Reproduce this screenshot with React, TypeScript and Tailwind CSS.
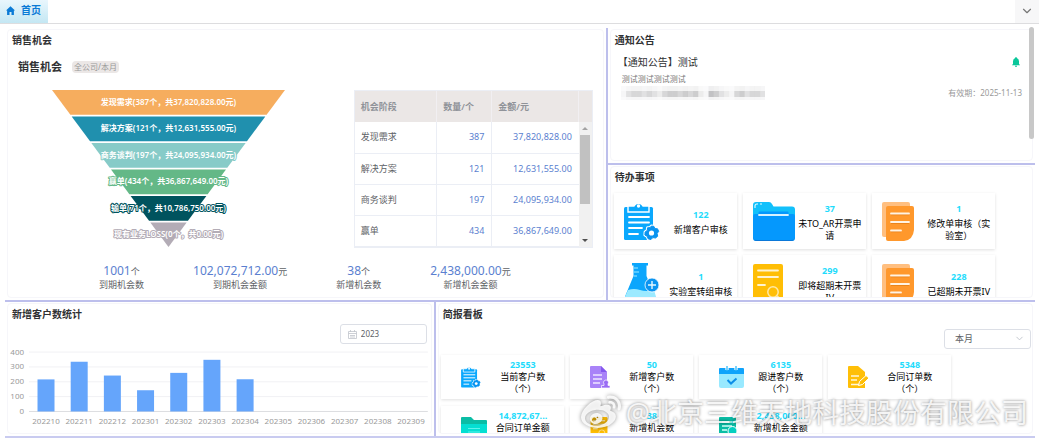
import React from "react";
import { FaWeibo } from "react-icons/fa";
import { ChevronDown } from "lucide-react";

type IconProps = { className?: string };

const GEAR =
  "M0 -7 L2.4 -6.6 L3.4 -4.4 L6 -4.2 L7.2 -1.6 L5.6 0.4 L6.2 3.2 L4 5 L1.4 4.6 L-0.6 6.6 L-3.4 5.8 L-4.2 3.4 L-6.6 2 L-6.4 -1 L-4.2 -2.6 L-4 -5.2 L-1.4 -5.4 Z";

function ClipboardIcon({ className }: IconProps) {
  return (
    <svg viewBox="0 0 36 40" className={className} aria-hidden="true">
      <rect x="0" y="6" width="29" height="33" rx="1.5" fill="#0aa8fd" />
      <path d="M4 5h6a5 5 0 0 1 9 0h6v6H4z" fill="#0aa8fd" stroke="#fff" strokeWidth="1.4" />
      <circle cx="14.500" cy="5" r="1.700" fill="#fff" />
      <path d="M5 16h20M5 21.500h20M5 27h13M5 33h9" stroke="#fff" strokeWidth="1.800" strokeLinecap="round" />
      <g transform="translate(27.500 32)">
        <path d={GEAR} fill="#0aa2fb" stroke="#fff" strokeWidth="3" strokeLinejoin="round" />
        <path d={GEAR} fill="#0a94f0" stroke="#0a94f0" strokeWidth="1" strokeLinejoin="round" />
        <circle r="2.600" fill="#fff" />
      </g>
    </svg>
  );
}

function BlueFolderIcon({ className }: IconProps) {
  return (
    <svg viewBox="0 0 42 39" className={className} aria-hidden="true">
      <path d="M3 0h13q2 0 3 2l1.500 2.500H39q3 0 3 3V30H0V3q0-3 3-3z" fill="#12c0fb" />
      <path d="M0 14q0-2 2-2h3.500v-1.500q0-1 1-1h28q1 0 1 1V12H40q2 0 2 2v22q0 3-3 3H3q-3 0-3-3z" fill="#0598fd" />
      <path d="M0 35q0 4 4 4h34q4 0 4-4v2q-1 1-4 1H4q-3 0-4-1z" fill="#0b78d8" />
      <path d="M6 13h29" stroke="#d7f2ff" strokeWidth="1.800" strokeLinecap="round" />
      <path d="M2 6V4q0-2 2-2h1M7 2h2" stroke="#e4faff" strokeWidth="1.100" fill="none" />
    </svg>
  );
}

function OrangeDocIcon({ className }: IconProps) {
  return (
    <svg viewBox="0 0 32 39" className={className} aria-hidden="true">
      <path d="M2 0h24q2 0 2 2v33H2q-2 0-2-2V2q0-2 2-2z" fill="#ffbf80" />
      <path d="M6 4h24q2 0 2 2v22q-1 10-10 11H6q-2 0-2-2V6q0-2 2-2z" fill="#ff982c" />
      <path d="M9 12.500h18M9 21h18M9 29.500h10" stroke="#e57d14" strokeWidth="1.400" />
      <path d="M9 11.500h18M9 20h18M9 28.500h10" stroke="#fff3e4" strokeWidth="1.800" strokeLinecap="round" />
    </svg>
  );
}

function FlaskIcon({ className }: IconProps) {
  return (
    <svg viewBox="0 0 36 40" className={className} aria-hidden="true">
      <path d="M8 0h16v2.500h-1.500V13L32 36q1 4-3 4H3q-4 0-3-4L9.500 13V2.500H8z" fill="#0ba6fc" />
      <path d="M4 27q6-2 12 0t14 0l3 10q0 3-3 3H2q-3 0-2-4z" fill="#9ceaff" />
      <path d="M10 5h4M10 9h5M10 13h3" stroke="#9ceaff" strokeWidth="1.200" />
      <circle cx="28" cy="22" r="7" fill="#0b94f0" stroke="#fff" strokeWidth="0.800" />
      <path d="M28 18v8M24 22h8" stroke="#e4f8ff" strokeWidth="1.400" />
    </svg>
  );
}

function SearchDocIcon({ className }: IconProps) {
  return (
    <svg viewBox="0 0 30 39" className={className} aria-hidden="true">
      <rect width="30" height="39" rx="2" fill="#ffbe05" />
      <path d="M5 6.500h20M5 13h20M5 21h7" stroke="#fff3cf" strokeWidth="1.800" strokeLinecap="round" />
      <circle cx="20" cy="28" r="5.200" fill="none" stroke="#ffe9a6" strokeWidth="1.500" />
      <path d="M24 32l4 4" stroke="#ffe9a6" strokeWidth="1.800" />
    </svg>
  );
}

function PurpleDocIcon({ className }: IconProps) {
  return (
    <svg viewBox="0 0 20 22" className={className} aria-hidden="true">
      <path d="M1 0h10l6 6v16H1q-1 0-1-1V1q0-1 1-1z" fill="#a983f8" />
      <path d="M11 0v6h6z" fill="#8558ee" />
      <path d="M3 9h9M3 13h9M3 17h7" stroke="#eee6ff" strokeWidth="1.300" />
      <path d="M11.500 22v-2.500h2.500v-1.500a2.500 2.500 0 1 1 4 0v1.500h2V22z" fill="#9a6cf4" stroke="#fff" strokeWidth="0.700" />
    </svg>
  );
}

function CalendarIcon({ className }: IconProps) {
  return (
    <svg viewBox="0 0 25 22" className={className} aria-hidden="true">
      <path d="M1 2h23q1 0 1 1v5H0V3q0-1 1-1z" fill="#0fa3fb" />
      <path d="M0 8h25v12q0 2-2 2H2q-2 0-2-2z" fill="#99e9ff" />
      <path d="M8 0v4M17 0v4" stroke="#fff" strokeWidth="3.200" />
      <path d="M8 0v4M17 0v4" stroke="#49c4fb" strokeWidth="1.500" strokeLinecap="round" />
      <path d="M8.500 14l3.500 3.500 5.500-5" stroke="#0d8fe8" strokeWidth="2" fill="none" />
    </svg>
  );
}

function EditDocIcon({ className }: IconProps) {
  return (
    <svg viewBox="0 0 21 22" className={className} aria-hidden="true">
      <path d="M1 0h9l7 6v16H1q-1 0-1-1V1q0-1 1-1z" fill="#ffbf08" />
      <path d="M3 10h8M3 14h6M3 18.500h9" stroke="#fff6da" strokeWidth="1.500" />
      <path d="M10.500 19.500l1-4L18 9.500l3 2.500-6.500 6.500z" fill="#ffbf08" stroke="#fff" strokeWidth="1" />
    </svg>
  );
}

function GreenFolderIcon({ className }: IconProps) {
  return (
    <svg viewBox="0 0 26 22" className={className} aria-hidden="true">
      <path d="M1 0h9l3 3h12q1 0 1 1v8H0V1q0-1 1-1z" fill="#0bbda5" />
      <path d="M0 7h26v13q0 2-2 2H2q-2 0-2-2z" fill="#05dfd2" />
      <path d="M7 11.500h12M7 15h12" stroke="#5df3ea" strokeWidth="1.100" />
    </svg>
  );
}

function GreenSearchIcon({ className }: IconProps) {
  return (
    <svg viewBox="0 0 21 22" className={className} aria-hidden="true">
      <path d="M1 0h15q1 0 1 1v21H1q-1 0-1-1V1q0-1 1-1z" fill="#0bbda5" />
      <path d="M3 5h10M3 9h10M3 13h5" stroke="#d5fff8" strokeWidth="1.400" />
      <circle cx="13.500" cy="14" r="4.500" fill="#05cfc0" stroke="#fff" strokeWidth="1" />
      <path d="M16.500 17l4 4" stroke="#05cfc0" strokeWidth="2" />
    </svg>
  );
}

function Panel({ title, className, children }: { title: string; className?: string; children?: React.ReactNode }) {
  return (
    <section className={`relative min-w-0 min-h-0 flex px-[2px] pt-px pb-[2px] ${className ?? ""}`}>
      <div className="flex-1 min-w-0 flex flex-col overflow-hidden rounded border border-[#f6f6fa] bg-white">
        <h2 className="shrink-0 pl-1 text-[10px] leading-[20px] font-bold text-[#303133]">{title}</h2>
        {children}
      </div>
    </section>
  );
}

const stages = [
  { name: "发现需求", count: 387, amount: "37,820,828.00", color: "#f6ad5e" },
  { name: "解决方案", count: 121, amount: "12,631,555.00", color: "#2090ae" },
  { name: "商务谈判", count: 197, amount: "24,095,934.00", color: "#87cbc8" },
  { name: "赢单", count: 434, amount: "36,867,649.00", color: "#64b887" },
  { name: "输单", count: 71, amount: "10,786,750.00", color: "#00535e" },
  { name: "现有业务LOSS", count: 0, amount: "0.00", color: "#b3acb6" },
];

function Funnel() {
  const slope = 116.5 / 157;
  return (
    <svg viewBox="0 0 233 158" className="block w-[233px] h-[158px] overflow-visible" role="img" aria-label="销售机会漏斗">
      {stages.map((s, i) => {
        const top = i * 26.5;
        const bottom = Math.min(top + 24.8, 157);
        const a = top * slope;
        const b = bottom * slope;
        return <polygon key={s.name} points={`${a},${top} ${233 - a},${top} ${233 - b},${bottom} ${b},${bottom}`} fill={s.color} />;
      })}
      {stages.map((s, i) => (
        <text
          key={s.name}
          x="116.500"
          y={i * 26.5 + 14.5}
          textAnchor="middle"
          fill="#fff"
          stroke={s.color}
          strokeWidth="2"
          strokeLinejoin="round"
          paintOrder="stroke"
          className="text-[8px] font-semibold"
        >
          {`${s.name}(${s.count}个，共${s.amount}元)`}
        </text>
      ))}
    </svg>
  );
}

function StageTable() {
  return (
    <div className="relative w-[239px] h-[158px] overflow-hidden border border-[#ebeef5]">
      <table className="w-full table-fixed border-collapse text-[9px] leading-[12px]">
        <colgroup>
          <col className="w-[82px]" />
          <col className="w-[55px]" />
          <col />
          <col className="w-[13px]" />
        </colgroup>
        <thead>
          <tr className="h-[31px] bg-[#ebe7e6] text-left text-[#909399]">
            <th className="border-r border-[#f1eff2] px-[6px] font-semibold">机会阶段</th>
            <th className="border-r border-[#f1eff2] px-[6px] font-semibold">数量/个</th>
            <th className="border-r border-[#f1eff2] px-[6px] font-semibold">金额/元</th>
            <th />
          </tr>
        </thead>
        <tbody>
          {stages.slice(0, 4).map((s) => (
            <tr key={s.name} className="h-[31px] border-b border-[#ebeef5] text-[#606266]">
              <td className="border-r border-[#ebeef5] px-[6px]">{s.name}</td>
              <td className="border-r border-[#ebeef5] px-[7px] text-right text-[#5b7fd0]">{s.count}</td>
              <td className="px-[7px] text-right text-[#5b7fd0]">{s.amount}</td>
              <td />
            </tr>
          ))}
        </tbody>
      </table>
      <div className="absolute right-0 top-[31px] bottom-0 w-[13px] bg-[#f1f1f1] flex flex-col items-center justify-between py-[5px]">
        <svg viewBox="0 0 6 3" className="w-[6px] h-[3px]" aria-hidden="true"><path d="M0 3l3-3 3 3z" fill="#a3a3a3" /></svg>
        <svg viewBox="0 0 6 3" className="w-[6px] h-[3px]" aria-hidden="true"><path d="M0 0l3 3 3-3z" fill="#505050" /></svg>
        <div className="absolute top-[13px] w-[10px] h-[69px] bg-[#c1c1c1]" />
      </div>
    </div>
  );
}

const totals = [
  { value: "1001", unit: "个", label: "到期机会数" },
  { value: "102,072,712.00", unit: "元", label: "到期机会金额" },
  { value: "38", unit: "个", label: "新增机会数" },
  { value: "2,438,000.00", unit: "元", label: "新增机会金额" },
];

const todos = [
  { value: "122", label: "新增客户审核", icon: <ClipboardIcon className="w-[36px] h-[40px]" /> },
  { value: "37", label: "未TO_AR开票申请", icon: <BlueFolderIcon className="w-[42px] h-[39px]" /> },
  { value: "1", label: "修改单审核（实验室）", icon: <OrangeDocIcon className="w-[32px] h-[39px]" /> },
  { value: "1", label: "实验室转组审核", icon: <FlaskIcon className="w-[36px] h-[40px]" /> },
  { value: "299", label: "即将超期未开票IV", icon: <SearchDocIcon className="w-[30px] h-[39px]" /> },
  { value: "228", label: "已超期未开票IV", icon: <OrangeDocIcon className="w-[32px] h-[39px]" /> },
];

const reports = [
  { value: "23553", label: "当前客户数（个）", icon: <ClipboardIcon className="w-[20px] h-[22px]" /> },
  { value: "50", label: "新增客户数（个）", icon: <PurpleDocIcon className="w-[20px] h-[22px]" /> },
  { value: "6135", label: "跟进客户数（个）", icon: <CalendarIcon className="w-[25px] h-[22px]" /> },
  { value: "5348", label: "合同订单数（个）", icon: <EditDocIcon className="w-[21px] h-[22px]" /> },
  { value: "14,872,67...", label: "合同订单金额", icon: <GreenFolderIcon className="w-[26px] h-[22px]" /> },
  { value: "38", label: "新增机会数", icon: <SearchDocIcon className="w-[18px] h-[22px]" /> },
  { value: "2,438,000...", label: "新增机会金额", icon: <GreenSearchIcon className="w-[21px] h-[22px]" /> },
];

const months = ["202210", "202211", "202212", "202301", "202302", "202303", "202304", "202305", "202306", "202307", "202308", "202309"];
const customers = [216, 335, 242, 143, 260, 348, 217];

function CustomerChart() {
  return (
    <svg viewBox="0 0 423 86" className="block w-full" role="img" aria-label="新增客户数统计">
      {[0, 100, 200, 300, 400].map((v) => {
        const y = 67.5 - v * 0.1485;
        return (
          <g key={v}>
            <path d={`M21 ${y}H420`} stroke={v === 0 ? "#dcdde0" : "#f1f1f4"} />
            <text x="16" y={y + 2.5} textAnchor="end" fill="#999" className="text-[8px]">{v}</text>
          </g>
        );
      })}
      {customers.map((v, i) => (
        <rect key={months[i]} x={29.5 + i * 33.2} y={67.5 - v * 0.1485} width="17" height={v * 0.1485} fill="#65a5fb" />
      ))}
      {months.map((m, i) => (
        <text key={m} x={38 + i * 33.2} y="80" textAnchor="middle" fill="#999" className="text-[8px]">{m}</text>
      ))}
    </svg>
  );
}

function MaskedLine() {
  const shades = [0, 2, 3, 3, 2, 3, 2, 1, 3, 4, 4, 3, 4, 3, 4, 1, 0, 5, 4, 2, 1, 0, 3, 4, 2, 3, 3, 2];
  return (
    <svg viewBox="0 0 144 14" className="block w-[144px] h-[14px]" aria-hidden="true">
      {shades.map((s, i) => (
        <g key={i} fill="#6b6b70">
          <rect x={i * 5.15} y="0" width="5.200" height="5" opacity={0.03 + s * 0.015} />
          <rect x={i * 5.15} y="5" width="5.200" height="6" opacity={0.06 + s * 0.07} />
          <rect x={i * 5.15} y="11" width="5.200" height="3" opacity={0.03 + s * 0.01} />
        </g>
      ))}
    </svg>
  );
}

export default function App() {
  return (
    <div className="relative flex h-screen min-h-[438px] w-full flex-col overflow-hidden bg-white font-['Noto_Sans','Noto_Sans_CJK_SC',sans-serif] text-[#303133]">
      <header className="flex h-6 shrink-0 items-stretch justify-between border-b border-[#dddddf] bg-white">
        <a href="#home" className="flex w-12 items-center gap-[6px] bg-linear-to-b from-[#e9f6fd] to-[#c4e7f3] pl-[6px] pb-[2px] text-[10px] font-bold text-[#0b7ad6]">
          <svg viewBox="0 0 9 9" className="w-[9px] h-[9px]" aria-hidden="true">
            <path d="M4.500 0.300L9 4.600H7.900V9H5.500V6H3.500V9H1.100V4.600H0z" fill="#0b7ad6" />
          </svg>
          首页
        </a>
        <button aria-label="更多标签" className="flex w-6 items-center justify-center bg-[#f7f7f8] pb-[2px] text-[#777]">
          <ChevronDown size={14} strokeWidth={2} />
        </button>
      </header>

      <main className="flex min-h-0 flex-1 flex-col pt-1 pl-[5px] pr-1">
        <div className="flex min-h-0 flex-[272] border-b-2 border-[#bdbfec]">
          <Panel title="销售机会" className="flex-[598]">
            <div className="flex h-[34px] shrink-0 items-center gap-[10px] pl-[10px]">
              <h3 className="text-[11px] font-bold">销售机会</h3>
              <span className="rounded-sm bg-[#ebe7e6] px-[2px] text-[8px] leading-[12px] text-[#999]">全公司/本月</span>
            </div>
            <div className="mt-[6px] flex justify-between pl-[44px] pr-[10px]">
              <Funnel />
              <StageTable />
            </div>
            <div className="mt-[15px] flex gap-[49px] pl-[91px] text-center text-[9px] text-[#606266]">
              {totals.map((t) => (
                <div key={t.label}>
                  <p className="leading-[15px]">
                    <span className="text-[12px] text-[#5b7fd0]">{t.value}</span>
                    {t.unit}
                  </p>
                  <p className="leading-[12px]">{t.label}</p>
                </div>
              ))}
            </div>
          </Panel>

          <div className="flex min-w-0 flex-[428] flex-col border-l-2 border-[#bdbfec]">
            <Panel title="通知公告" className="flex-[137] border-b-2 border-[#bdbfec]">
              <article className="pl-[7px] pr-[10px]">
                <div className="flex items-center justify-between pr-[2px]">
                  <h3 className="text-[10px] leading-[24px]">【通知公告】测试</h3>
                  <svg viewBox="0 0 8 10" className="w-[8px] h-[10px]" aria-label="提醒">
                    <path d="M4 0q0.800 0 0.800 0.900Q7 1.600 7 4.300V6.800L8 8.200H0L1 6.800V4.300Q1 1.600 3.200 0.900 3.200 0 4 0zM3 8.700h2q0 1.200-1 1.200t-1-1.200z" fill="#0ac79a" />
                  </svg>
                </div>
                <p className="pl-1 text-[8px] leading-[10px] text-[#777]">测试测试测试测试</p>
                <div className="flex items-center justify-between pl-[3px] pt-px">
                  <MaskedLine />
                  <p className="text-[8px] leading-[16px] text-[#999]">有效期：2025-11-13</p>
                </div>
              </article>
              <div className="absolute right-px -top-px h-[112px] w-[5px] rounded-full bg-[#c8c8c8]" />
            </Panel>
            <Panel title="待办事项" className="flex-[136]">
              <div className="mt-[6px] grid grid-cols-[repeat(auto-fill,123px)] gap-[6px] pl-[3px]">
                {todos.map((t) => (
                  <a key={t.label} href="#todo" className="flex h-[56px] items-center bg-white pl-[10px] pr-1 shadow-[0_1px_3px_rgba(0,0,0,0.13)]">
                    <span className="flex w-[42px] shrink-0">{t.icon}</span>
                    <span className="ml-[3px] flex w-16 shrink-0 flex-col text-center text-[9px] leading-[12px] text-black">
                      <b className="leading-[18px] text-[#1fdcfc]">{t.value}</b>
                      {t.label}
                    </span>
                  </a>
                ))}
              </div>
            </Panel>
          </div>
        </div>

        <div className="flex min-h-0 flex-[134] border-b-2 border-[#c9cbf0]">
          <Panel title="新增客户数统计" className="flex-[429]">
            <label className="mr-1 flex h-5 w-[87px] shrink-0 items-center gap-1 self-end rounded-[3px] border border-[#dcdfe6] pl-[7px]">
              <svg viewBox="0 0 9 9" className="w-[9px] h-[9px] shrink-0" aria-hidden="true">
                <path d="M0.500 1.500h8v7h-8zM0.500 3.500h8M2.500 0v2M6.500 0v2M2 5.500h5M2 7h5" stroke="#c0c4cc" strokeWidth="0.800" fill="none" />
              </svg>
              <input aria-label="年份" defaultValue="2023" className="w-full min-w-0 bg-transparent text-[8px] text-[#606266] outline-none" />
            </label>
            <CustomerChart />
          </Panel>
          <Panel title="简报看板" className="flex-[601] border-l-2 border-[#bdbfec]">
            <div className="relative mr-px h-5 w-[87px] shrink-0 self-end">
              <select aria-label="统计周期" defaultValue="本月" className="h-full w-full appearance-none rounded-[3px] border border-[#dcdfe6] bg-white pl-[10px] text-[9px] leading-[16px] text-[#606266]">
                <option>本月</option>
                <option>本年</option>
              </select>
              <ChevronDown size={11} strokeWidth={2} className="pointer-events-none absolute right-[6px] top-[9px] text-[#c0c4cc]" />
            </div>
            <div className="mt-[11px] grid grid-cols-[repeat(auto-fill,123px)] gap-x-[6px] gap-y-[7px] pl-[2px]">
              {reports.map((r) => (
                <a key={r.label} href="#report" className="flex h-11 items-center bg-white pl-5 shadow-[0_1px_3px_rgba(0,0,0,0.13)]">
                  <span className="flex w-[26px] shrink-0">{r.icon}</span>
                  <span className="ml-1 flex w-16 shrink-0 flex-col text-center text-[9px] leading-[12px] text-black">
                    <b className="text-[#1fdcfc]">{r.value}</b>
                    <span className="min-h-6">{r.label}</span>
                  </span>
                </a>
              ))}
            </div>
          </Panel>
        </div>
      </main>

      <div className="pointer-events-none absolute bottom-[4px] right-[11px] flex items-center gap-[5px] text-[27px] leading-[42px] text-white/85 [text-shadow:0_0_3px_rgba(0,0,0,0.5)]">
        <FaWeibo className="h-[40px] w-[40px] drop-shadow-[0_0_2px_rgba(0,0,0,0.5)]" />
        <span className="whitespace-nowrap">@北京三维天地科技股份有限公司</span>
      </div>
    </div>
  );
}
